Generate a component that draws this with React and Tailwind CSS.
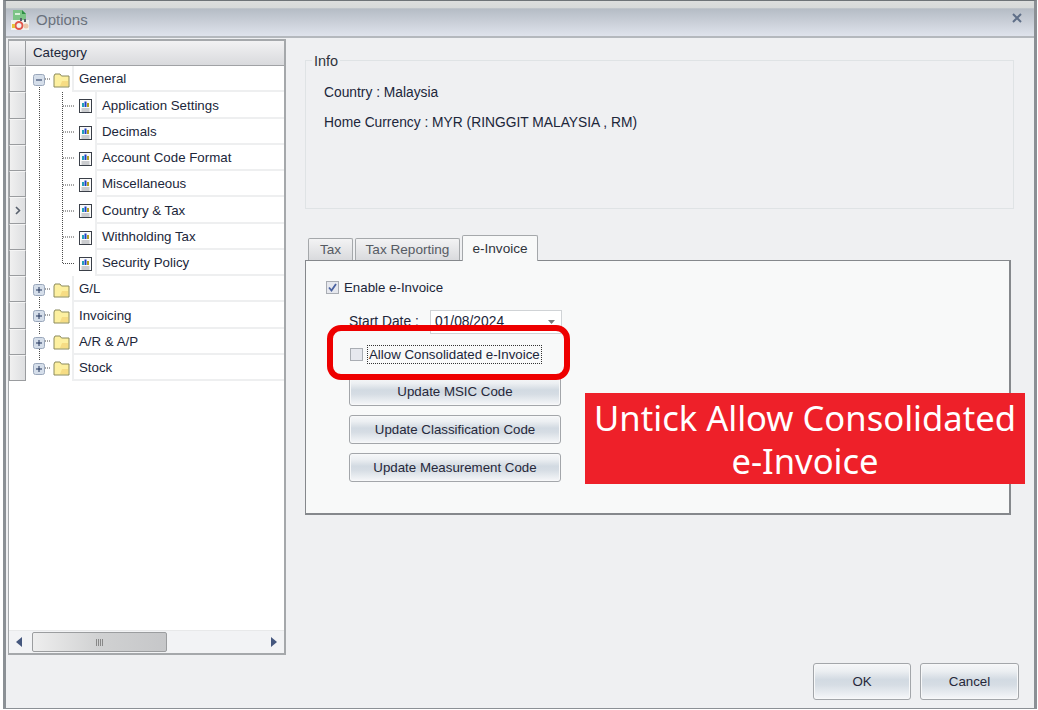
import React from "react";

const categories = [
  { name: "General", open: true },
  { name: "Application Settings", child: true },
  { name: "Decimals", child: true },
  { name: "Account Code Format", child: true },
  { name: "Miscellaneous", child: true },
  { name: "Country & Tax", child: true, current: true },
  { name: "Withholding Tax", child: true },
  { name: "Security Policy", child: true },
  { name: "G/L" },
  { name: "Invoicing" },
  { name: "A/R & A/P" },
  { name: "Stock" },
];

const btn =
  "flex items-center justify-center rounded-[3px] border border-[#a3a6aa] bg-[linear-gradient(#f6f7f9_0%,#eceff2_20%,#d2dae2_45%,#d6dde4_60%,#f6f7f9_100%)] text-[#26283a] shadow-[inset_0_0_0_1px_#f7f8f9]";

const AppIcon = () => (
  <svg width="18" height="20" viewBox="0 0 18 20" className="shrink-0">
    <path d="M2 0 H11 L15 4 V11 H2 Z" fill="#7cc487" />
    <path d="M11 0 L15 4 H11 Z" fill="#2f8f45" />
    <rect x="4" y="3" width="5" height="2" fill="#d7efd9" />
    <rect x="0" y="10" width="18" height="10" fill="#f2f3ee" />
    <rect x="9" y="8" width="2" height="3" fill="#56606a" />
    <rect x="13" y="9" width="2" height="3" fill="#56606a" />
    <circle cx="8" cy="15.5" r="3.5" fill="none" stroke="#e2574c" strokeWidth="2" />
    <circle cx="15" cy="16" r="2.5" fill="#ecc5a8" />
    <rect x="1" y="14" width="3" height="4" fill="#e8c23c" />
  </svg>
);

const Folder = () => (
  <svg width="17" height="15" viewBox="0 0 17 15" className="shrink-0">
    <path d="M1 3 L2 1 H7 L8.5 3 H16 V14 H1 Z" fill="#fdf0a0" stroke="#8b8a5c" />
    <path d="M9 8 H15 V13 H7 Z" fill="#f6dc84" />
  </svg>
);

const ReportIcon = () => (
  <svg width="13" height="14" viewBox="0 0 13 14" className="shrink-0">
    <rect x="0.5" y="0.5" width="12" height="13" fill="#fafafa" stroke="#3a3f48" />
    <rect x="3" y="4" width="2" height="4" fill="#22a0b8" />
    <rect x="5.5" y="2.5" width="2" height="5.5" fill="#1c3fc4" />
    <rect x="8" y="4" width="2" height="4" fill="#b0a020" />
    <path d="M2.5 10 H10.5 M2.5 12 H10.5" stroke="#9a9da3" />
  </svg>
);

const Expander = ({ open }) => (
  <svg width="12" height="12" viewBox="0 0 12 12" className="shrink-0">
    <rect x="0.5" y="0.5" width="11" height="11" rx="2" fill="#d5deea" stroke="#9aa7bb" />
    <path d={open ? "M3 6 H9" : "M3 6 H9 M6 3 V9"} stroke="#1f3158" />
  </svg>
);

// dotted connectors, coordinates are the screenshot's own
const TreeLines = () => (
  <svg
    viewBox="9 66 276 320"
    width="276"
    height="320"
    className="absolute left-0 top-0 pointer-events-none"
  >
    <g stroke="#4b4b4b" strokeDasharray="1 1" fill="none">
      <path d="M39.5 85 V283 M39.5 295 V309 M39.5 321 V335 M39.5 347 V361" />
      <path d="M62.5 92 V263.5 H75" />
      <path d="M63 106 H75 M63 132 H75 M63 158 H75 M63 185 H75 M63 211 H75 M63 237 H75" />
      <path d="M45 79 H50 M45 289 H50 M45 315 H50 M45 341 H50 M45 368 H50" />
    </g>
  </svg>
);

const TreeRow = ({ item }) => (
  <div className="flex h-[26.25px] relative">
    <div className="w-[17px] shrink-0 flex items-center justify-center border border-[#9a9c9f] border-t-[#f5f5f5] bg-[linear-gradient(90deg,#f0f0f0,#dedfe1)]">
      {item.current && (
        <svg width="6" height="9" viewBox="0 0 6 9">
          <path d="M1 1 L4.5 4.5 L1 8" fill="none" stroke="#59616d" strokeWidth="1.6" />
        </svg>
      )}
    </div>
    {item.child ? (
      <div className="w-[71px] shrink-0 flex items-center pl-[53px] pt-[2px]">
        <ReportIcon />
      </div>
    ) : (
      <div className="w-[48px] shrink-0 flex items-center pl-[7px] pt-[2px] gap-[8px]">
        <Expander open={item.open} />
        <Folder />
      </div>
    )}
    <div className="flex-1 flex items-center pl-[5px] pt-[2px] border-b-2 border-l-2 border-[#eeeff0] -ml-[2px] text-[#20263a]">
      {item.name}
    </div>
  </div>
);

const Check = ({ checked }) => (
  <span className="w-[13px] h-[13px] shrink-0 flex items-center justify-center border border-[#a9adb3] bg-[#e6e8ee]">
    {checked && (
      <svg width="11" height="11" viewBox="0 0 11 11">
        <path d="M2 5.5 L4.5 8.5 L9 2" fill="none" stroke="#4a62a0" strokeWidth="1.8" />
      </svg>
    )}
  </span>
);

export default function App() {
  return (
    <div
      className="relative w-[1038px] h-[710px] bg-white overflow-hidden text-[13.3px] leading-none"
      style={{ fontFamily: '"Liberation Sans", Arial, sans-serif' }}
    >
      <div className="ml-[3px] mr-px h-[709px] flex flex-col border-x-[3px] border-y border-[#8b9095] border-t-[#6d7377] bg-[#eff0f2]">
        <div className="h-[37px] shrink-0 flex items-center justify-between pt-[2px] pl-[5px] pr-[12px] bg-[linear-gradient(#dcdedd_0%,#d6d9d9_20%,#b5bcc5_22%,#dfe3ec_100%)] border-b-2 border-[#b4b8bd]">
          <div className="flex items-center gap-[7px] text-[15px] text-[#6a717c]">
            <AppIcon />
            Options
          </div>
          <svg width="10" height="10" viewBox="0 0 10 10" className="-mt-[4px]">
            <path d="M1 1 L9 9 M9 1 L1 9" stroke="#5f6f88" strokeWidth="2" />
          </svg>
        </div>

        <div className="flex-1 flex min-h-0">
          <div className="w-[278px] ml-[2px] mt-[1px] mb-[53px] shrink-0 flex flex-col border-2 border-l border-[#a5a8ab] bg-white">
            <div className="h-[25px] shrink-0 flex border-b border-[#a0a2a5] bg-[linear-gradient(#f2f2f3,#d9dadd)]">
              <div className="w-[17px] border-r border-[#9a9c9f]"></div>
              <div className="pl-[7px] flex items-center text-[#20263a]">Category</div>
            </div>
            <div className="relative flex-1">
              <TreeLines />
              {categories.map((item) => (
                <TreeRow key={item.name} item={item} />
              ))}
            </div>
            <div className="h-[23px] shrink-0 flex items-center px-[7px] bg-[#f2f3f5] border-t border-[#e8e9ea]">
              <svg width="6" height="10" viewBox="0 0 6 10">
                <path d="M6 0 V10 L0 5 Z" fill="#45577e" />
              </svg>
              <div className="w-[135px] h-[20px] ml-[10px] flex items-center justify-center rounded-[2px] border border-[#9b9d9f] bg-[linear-gradient(90deg,#eeeeee,#d0d1d2_50%,#c6c7c9)]">
                <div className="w-[8px] h-[7px] bg-[repeating-linear-gradient(90deg,#888_0,#888_1px,transparent_1px,transparent_2px)]"></div>
              </div>
              <svg width="6" height="10" viewBox="0 0 6 10" className="ml-auto">
                <path d="M0 0 V10 L6 5 Z" fill="#45577e" />
              </svg>
            </div>
          </div>

          <div className="flex-1 flex flex-col pl-[19px] pr-[15px] pb-[8px]">
            <fieldset className="w-[709px] h-[158px] mt-[13px] shrink-0 border border-[#dfe3e5] pl-[18px] text-[13.8px] text-[#20263a]">
              <legend className="-ml-[12px] px-[2px] text-[14.5px] h-[19px] leading-[20px] text-[#30343c]">Info</legend>
              <p className="mt-[16px]">Country : Malaysia</p>
              <p className="mt-[16px]">Home Currency : MYR (RINGGIT MALAYSIA , RM)</p>
            </fieldset>

            <div className="mt-[25px] h-[26px] shrink-0 flex items-end pl-[3px] gap-[2px] relative z-10 text-[13.6px]">
              <div className="w-[45px] h-[22px] flex items-center justify-center border border-b-0 border-[#a5a8ab] rounded-t-[2px] bg-[linear-gradient(#f3f3f4,#d9dadd)] text-[#565b63]">Tax</div>
              <div className="w-[105px] h-[22px] flex items-center justify-center border border-b-0 border-[#a5a8ab] rounded-t-[2px] bg-[linear-gradient(#f3f3f4,#d9dadd)] text-[#565b63]">Tax Reporting</div>
              <div className="w-[76px] h-[26px] -mb-px flex items-center justify-center border border-b-0 border-[#a5a8ab] rounded-t-[2px] bg-[#f8f9f9] text-[#30343c]">e-Invoice</div>
            </div>
            <div className="w-[706px] h-[255px] shrink-0 border border-[#85888c] border-r-2 border-b-2 bg-[#f8f9f9] text-[#20263a]">
              <label className="flex items-center gap-[5px] ml-[20px] mt-[20px]">
                <Check checked />
                Enable e-Invoice
              </label>
              <div className="flex items-center ml-[43px] mt-[16px] h-[24px]">
                <span className="w-[81px] text-[13.8px]">Start Date :</span>
                <div className="w-[132px] h-[24px] flex items-center justify-between pl-[4px] pr-[6px] border border-[#d0d3d6] bg-white text-[13.8px]">
                  01/08/2024
                  <svg width="7" height="4" viewBox="0 0 7 4">
                    <path d="M0 0 H7 L3.5 4 Z" fill="#777" />
                  </svg>
                </div>
              </div>
              <label className="flex items-center gap-[4px] ml-[44px] mt-[10px] h-[21px]">
                <Check />
                <span className="border border-dotted border-[#333] px-px py-[2px]">Allow Consolidated e-Invoice</span>
              </label>
              <div className="flex flex-col gap-[9px] ml-[43px] mt-[12px] w-[212px]">
                <button className={`${btn} h-[29px]`}>Update MSIC Code</button>
                <button className={`${btn} h-[29px]`}>Update Classification Code</button>
                <button className={`${btn} h-[29px]`}>Update Measurement Code</button>
              </div>
            </div>

            <div className="mt-auto flex justify-end gap-[9px]">
              <button className={`${btn} w-[98px] h-[37px]`}>OK</button>
              <button className={`${btn} w-[99px] h-[37px]`}>Cancel</button>
            </div>
          </div>
        </div>
      </div>

      {/* annotations lying over the dialog */}
      <div className="absolute left-[327px] top-[325px] w-[243px] h-[55px] rounded-[14px] border-[6px] border-[#ee0000]"></div>
      <div
        className="absolute left-[585px] top-[393px] w-[440px] h-[91px] flex items-center justify-center bg-[#ee2029] text-white text-[34.6px] leading-[43px] text-center"
        style={{ fontFamily: '"Noto Sans", sans-serif' }}
      >
        Untick Allow Consolidated
        <br />
        e-Invoice
      </div>
    </div>
  );
}
